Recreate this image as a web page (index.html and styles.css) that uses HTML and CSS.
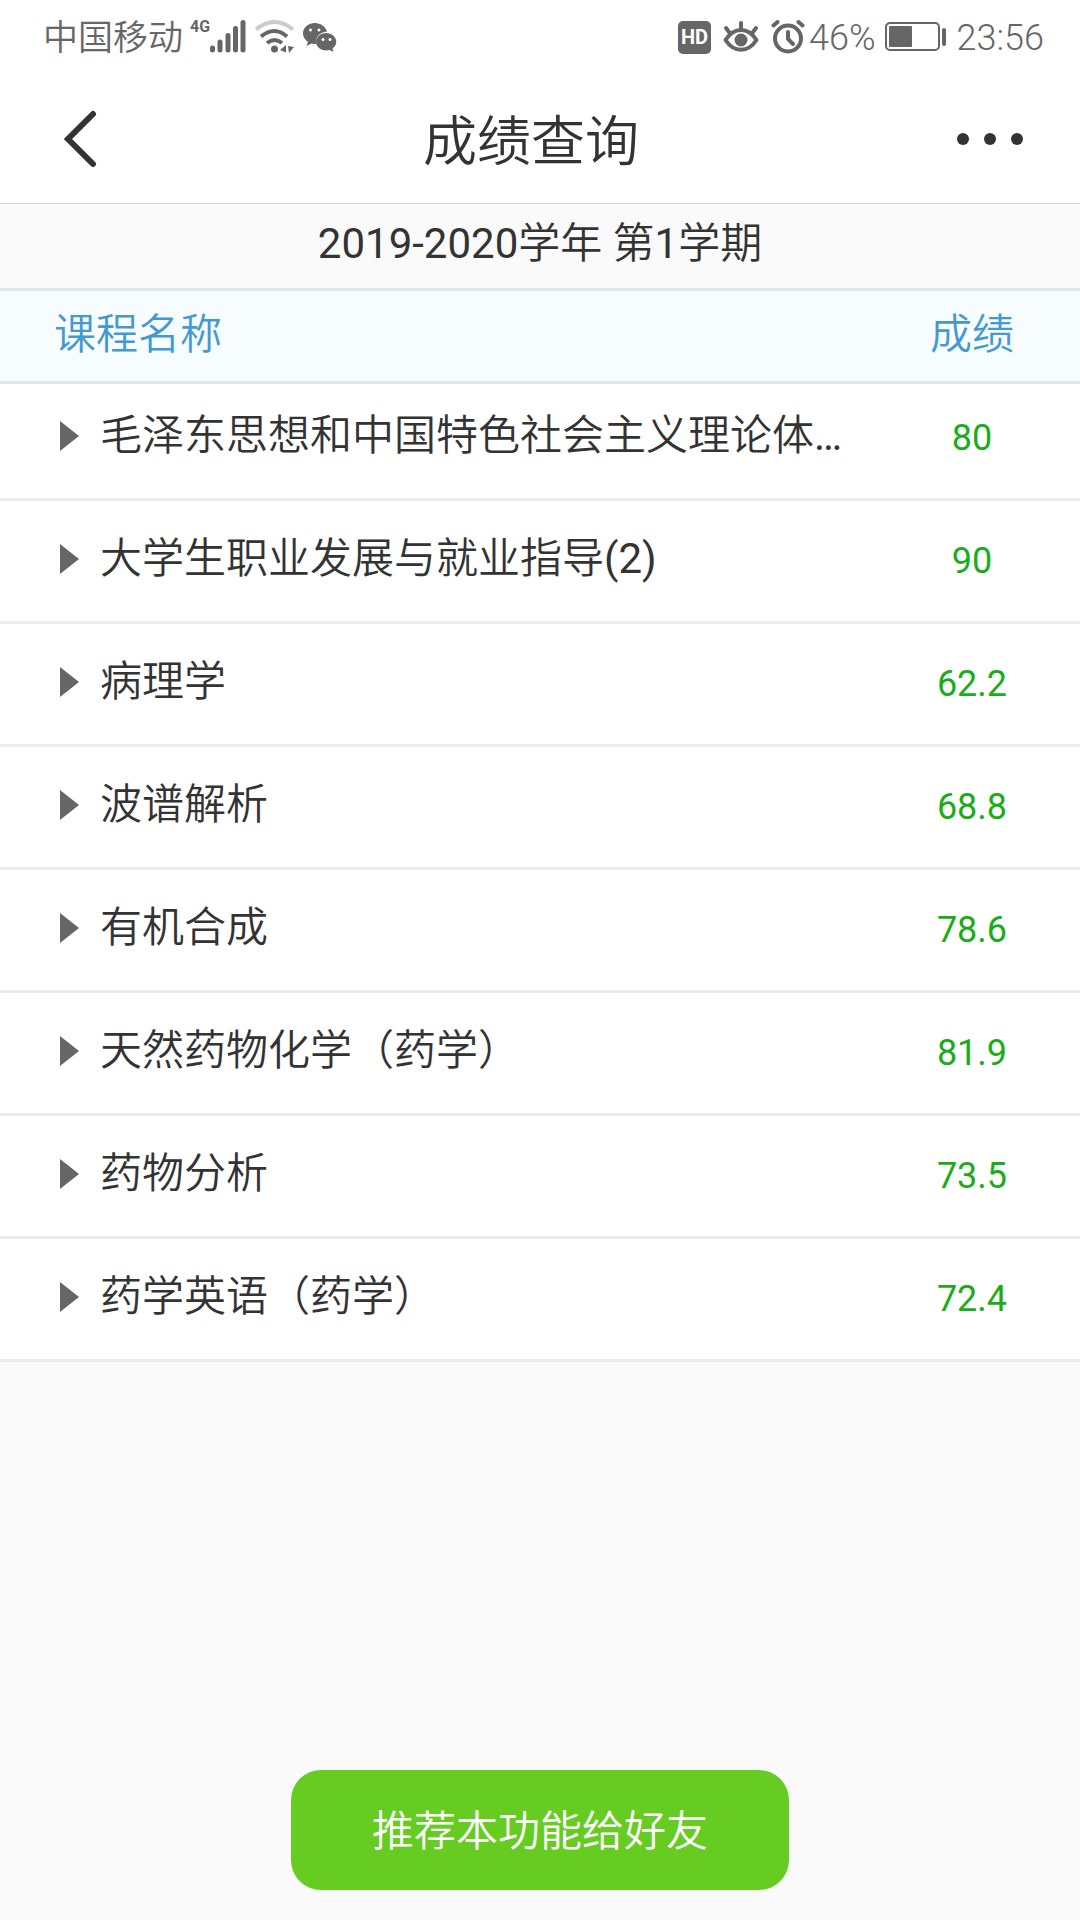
FILE: index.html
```html
<!DOCTYPE html>
<html lang="zh-CN">
<head>
    <meta charset="UTF-8">
    <meta name="viewport" content="width=device-width, initial-scale=1.0">
    <title>成绩查询</title>
    <link rel="stylesheet" href="styles.css">
</head>
<body>

<div class="status">
    <span class="carrier">中国移动</span>
    <span class="net">4G</span>
    <svg class="signal" width="36" height="34" viewBox="0 0 36 34" stroke="#666" stroke-width="5" stroke-linecap="round">
        <path d="M2.5 28v2M10 22v8M18 15.500v14.500M25.500 8.500v21.500M33 2.500v27.500"/>
    </svg>
    <svg class="wifi" width="40" height="34" viewBox="0 0 40 34" fill="none" stroke="#666" stroke-width="4">
        <path d="M1 9.500Q19.500 -5.500 38 9.500" stroke="#ccc"/>
        <path d="M6 16.500Q19.500 5.500 32 16.500"/>
        <path d="M12 23Q19.500 17 27 23"/>
        <circle cx="19.500" cy="29" r="3.500" fill="#666" stroke="none"/>
        <path d="M31 25v7.500l-6-2.500zM33 26l6 1-5 6z" fill="#666" stroke="none"/>
    </svg>
    <svg class="wechat" width="34" height="30" viewBox="0 0 34 30" fill="#666">
        <path d="M12 1C5.500 1 0 5.500 0 11.500c0 3.500 2 6.500 5 8.500l-1.500 4 5-2.500c1.500.5 3 .5 4.500.5C12 15 17 10 24 9.500 22.500 4.500 17.500 1 12 1z"/>
        <path d="M23 11c-5.500 0-10 4-10 8.800S17.500 28.500 23 28.500c1.200 0 2.400-.2 3.500-.5l4 2-1-3.500c2.300-1.700 3.800-4 3.800-6.700C33.300 15 28.500 11 23 11z"/>
        <g fill="#fff">
            <circle cx="7.500" cy="8" r="1.500"/>
            <circle cx="16" cy="8" r="1.500"/>
            <circle cx="20" cy="17.500" r="1.500"/>
            <circle cx="27" cy="17.500" r="1.500"/>
        </g>
    </svg>

    <div class="statusRight">
        <span class="hd">HD</span>
        <svg width="36" height="34" viewBox="0 0 36 34" fill="none" stroke="#666" stroke-width="4" stroke-linecap="round">
            <path d="M2.500 20C11 6.500 25 6.500 33.500 20C25 33 11 33 2.500 20z" stroke-linejoin="round"/>
            <circle cx="18" cy="20" r="6.500" fill="#666" stroke="none"/>
            <path d="M18 3v6M3 8l3 4M33 8l-3 4"/>
        </svg>
        <svg class="alarm" width="34" height="34" viewBox="0 0 34 34" fill="none" stroke="#666" stroke-width="4" stroke-linecap="round">
            <circle cx="17" cy="18.500" r="13"/>
            <path d="M17 12v7l5 5"/>
            <path d="M2.500 5.500l4-3.500M31.500 5.500l-4-3.500"/>
        </svg>
        <span class="digits">46%</span>
        <svg class="battery" width="62" height="34" viewBox="0 0 62 34">
            <rect x="1" y="3" width="53" height="27" rx="4" fill="none" stroke="#666" stroke-width="2"/>
            <rect x="4" y="6" width="23" height="21" rx="1" fill="#666"/>
            <rect x="57" y="8" width="4" height="18" rx="2" fill="#666"/>
        </svg>
        <span class="digits">23:56</span>
    </div>
</div>

<header class="header">
    <button class="iconButton back" aria-label="返回">
        <svg width="34" height="58" viewBox="0 0 34 58" fill="none" stroke="#333" stroke-width="6" stroke-linecap="round">
            <path d="M30 4L5 29l25 25"/>
        </svg>
    </button>
    <h1>成绩查询</h1>
    <button class="iconButton" aria-label="更多">
        <svg width="66" height="12" viewBox="0 0 66 12" fill="#333">
            <circle cx="6" cy="6" r="6"/>
            <circle cx="33" cy="6" r="6"/>
            <circle cx="60" cy="6" r="6"/>
        </svg>
    </button>
</header>

<h2 class="term"><span class="latin">2019-2020</span>学年 第<span class="latin">1</span>学期</h2>

<table class="grades">
    <thead>
        <tr><th class="name">课程名称</th><th class="score">成绩</th></tr>
    </thead>
    <tbody>
        <tr><td><button class="course">毛泽东思想和中国特色社会主义理论体<span class="latin">…</span></button></td><td class="score">80</td></tr>
        <tr><td><button class="course">大学生职业发展与就业指导<span class="latin">(2)</span></button></td><td class="score">90</td></tr>
        <tr><td><button class="course">病理学</button></td><td class="score">62.2</td></tr>
        <tr><td><button class="course">波谱解析</button></td><td class="score">68.8</td></tr>
        <tr><td><button class="course">有机合成</button></td><td class="score">78.6</td></tr>
        <tr><td><button class="course">天然药物化学（药学）</button></td><td class="score">81.9</td></tr>
        <tr><td><button class="course">药物分析</button></td><td class="score">73.5</td></tr>
        <tr><td><button class="course">药学英语（药学）</button></td><td class="score">72.4</td></tr>
    </tbody>
</table>

<div class="bottom">
    <button class="share">推荐本功能给好友</button>
</div>

</body>
</html>
```

FILE: styles.css
```css
* {
    box-sizing: border-box;
}

body {
    margin: 0;
    min-height: 100vh;
    display: flex;
    flex-direction: column;
    background-color: #fafafa;
    color: #333;
    font-family: Roboto, "Noto Sans CJK SC", sans-serif;
    font-size: 42px;
    font-weight: 350;
}

button {
    border: none;
    padding: 0;
    background: none;
    color: inherit;
    font: inherit;
    cursor: pointer;
}

svg {
    display: block;
    flex: none;
}

/* keeps digits as heavy as the characters next to them */
.latin {
    font-weight: 400;
}

/* phone status bar */
.status {
    display: flex;
    align-items: center;
    height: 74px;
    padding: 0 36px 0 43px;
    background-color: #fff;
    color: #666;
    font-size: 36px;
    line-height: 38px;
}

.carrier {
    padding-top: 4px;
    font-size: 35px;
}

.digits {
    padding-top: 2px;
}

.net {
    align-self: flex-start;
    margin: 18px 0 0 7px;
    font-size: 16px;
    font-weight: bold;
    line-height: 18px;
}

.wifi {
    margin-left: 9px;
}

.wechat {
    margin-left: 8px;
}

.statusRight {
    display: flex;
    align-items: center;
    margin-left: auto;
}

.hd {
    width: 33px;
    height: 33px;
    margin-right: 12px;
    border-radius: 5px;
    background-color: #666;
    color: #fff;
    font-size: 20px;
    font-weight: bold;
    line-height: 33px;
    text-align: center;
}

.alarm {
    margin: 0 4px 0 12px;
}

.battery {
    margin: 0 10px 0 9px;
}

/* title bar */
.header {
    display: flex;
    align-items: center;
    justify-content: space-between;
    height: 130px;
    padding: 0 57px 0 63px;
    border-bottom: 1px solid #d5d5d5;
    background-color: #fff;
}

.header h1 {
    margin: 0;
    padding-top: 8px;
    font-size: 54px;
    font-weight: 350;
    line-height: 60px;
}

.iconButton {
    display: flex;
    align-items: center;
    width: 66px;
    height: 66px;
}

.back {
    width: 42px;
}

.term {
    margin: 0;
    padding: 10px 0 14px;
    font-size: 42px;
    font-weight: 350;
    line-height: 60px;
    text-align: center;
}

/* grade list */
.grades {
    width: 100%;
    table-layout: fixed;
    border-spacing: 0;
    background-color: #fff;
}

.grades th {
    padding: 14px 0 16px;
    border-top: 3px solid #dfe9ed;
    border-bottom: 3px solid #dfe9ed;
    background-color: #f7fdff;
    color: #4499d0;
    font-weight: 350;
    line-height: 60px;
}

.grades .name {
    padding-left: 54px;
    text-align: left;
}

.grades .score {
    width: 20%;
    padding-right: 0;
    text-align: center;
}

.grades td {
    height: 123px;
    padding: 0 0 4px;
    border-bottom: 3px solid #ebebeb;
}

.grades tbody tr:first-child td {
    height: 117px;
    padding-bottom: 10px;
}

.grades td.score {
    padding-bottom: 0;
    color: #1aad19;
    font-size: 36px;
    font-weight: 400;
}

.grades tbody tr:first-child td.score {
    padding-bottom: 6px;
}

.course {
    display: flex;
    align-items: center;
    width: 100%;
    padding-left: 60px;
    line-height: 60px;
    white-space: nowrap;
    text-align: left;
}

.course::before {
    content: "";
    flex: none;
    margin-right: 21px;
    border-left: 19px solid #666;
    border-top: 15px solid transparent;
    border-bottom: 15px solid transparent;
}

.bottom {
    display: flex;
    justify-content: center;
    margin-top: auto;
    padding: 30px;
}

.share {
    height: 120px;
    padding: 0 81px 6px;
    border-radius: 30px;
    background-color: #66cc22;
    color: #fff;
}
```
